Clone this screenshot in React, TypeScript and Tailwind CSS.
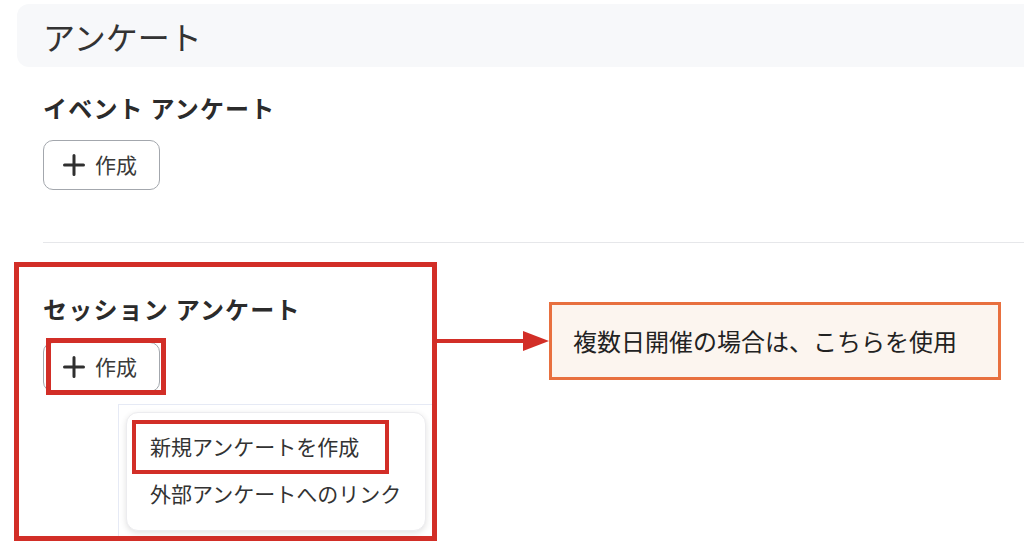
import React from "react";

function PlusIcon() {
  return (
    <svg width="22" height="22" viewBox="0 0 22 22" className="shrink-0">
      <path d="M11 1.5v19M1.5 11h19" stroke="#2f2f2f" strokeWidth="3" strokeLinecap="round" />
    </svg>
  );
}

function CreateButton() {
  return (
    <button className="flex h-[50px] w-[117px] items-center gap-[10px] rounded-[10px] border border-[#a3a7ad] bg-white pl-[19px] text-[21px] text-[#3a3a3a]">
      <PlusIcon />
      <span>作成</span>
    </button>
  );
}

export default function App() {
  return (
    <div
      className="h-[554px] w-[1024px] overflow-hidden bg-white"
      style={{ fontFamily: '"Noto Sans CJK JP", "Noto Sans", sans-serif' }}
    >
      {/* Header */}
      <div className="ml-[17px] mt-[4px] flex h-[63px] items-center rounded-l-[12px] bg-[#f7f8fa] pl-[26px]">
        <h1 className="text-[32px] font-normal leading-none text-[#333]">アンケート</h1>
      </div>

      {/* Event survey */}
      <section className="pl-[43px] pt-[25px]">
        <h2 className="text-[24px] font-bold leading-[32px] tracking-[0.05em] text-[#2b2b2b]">イベント アンケート</h2>
        <div className="mt-[16px]">
          <CreateButton />
        </div>
      </section>

      <div className="ml-[43px] mt-[52px] h-px bg-[#e6e7ea]" />

      {/* Session survey + annotation */}
      <div className="mt-[19px] flex items-start">
        <section className="relative ml-[14px] h-[279px] w-[423px] shrink-0 border-[5px] border-[#d22e27] pl-[24px] pt-[26px]">
          <h2 className="text-[24px] font-bold leading-[32px] tracking-[0.05em] text-[#2b2b2b]">セッション アンケート</h2>
          <div className="relative mt-[17px] w-fit">
            <CreateButton />
            <div className="absolute left-[3px] top-[-4px] h-[57px] w-[120px] border-[5px] border-[#d22e27]" />
          </div>

          {/* Dropdown */}
          <div className="absolute left-[99px] top-[137px] bottom-0 right-0 border-l border-t border-[#e6eaf5] bg-white">
            <div className="absolute left-[7px] top-[7px] flex h-[119px] w-[300px] flex-col gap-[9px] rounded-[12px] border border-[#ececef] bg-white px-[23px] pt-[14px] shadow-[0_2px_6px_rgba(0,0,0,0.12)]">
              <div className="relative text-[21px] leading-[38px] text-[#333]">
                新規アンケートを作成
                <div className="absolute left-[-18px] top-[-7px] h-[54px] w-[257px] border-[4px] border-[#d22e27]" />
              </div>
              <div className="text-[21px] leading-[38px] text-[#333]">外部アンケートへのリンク</div>
            </div>
          </div>
        </section>

        <div className="mt-[40px] flex items-center">
          <svg width="112" height="24" viewBox="0 0 112 24" className="shrink-0">
            <rect x="0" y="10" width="90" height="4" fill="#d22e27" />
            <polygon points="86,2 112,12 86,22" fill="#d22e27" />
          </svg>
          <div className="flex h-[78px] w-[452px] items-center border-[3px] border-[#e8703f] bg-[#fcf5ef] pl-[21px]">
            <span className="text-[24px] leading-none text-[#222]">複数日開催の場合は、こちらを使用</span>
          </div>
        </div>
      </div>
    </div>
  );
}
